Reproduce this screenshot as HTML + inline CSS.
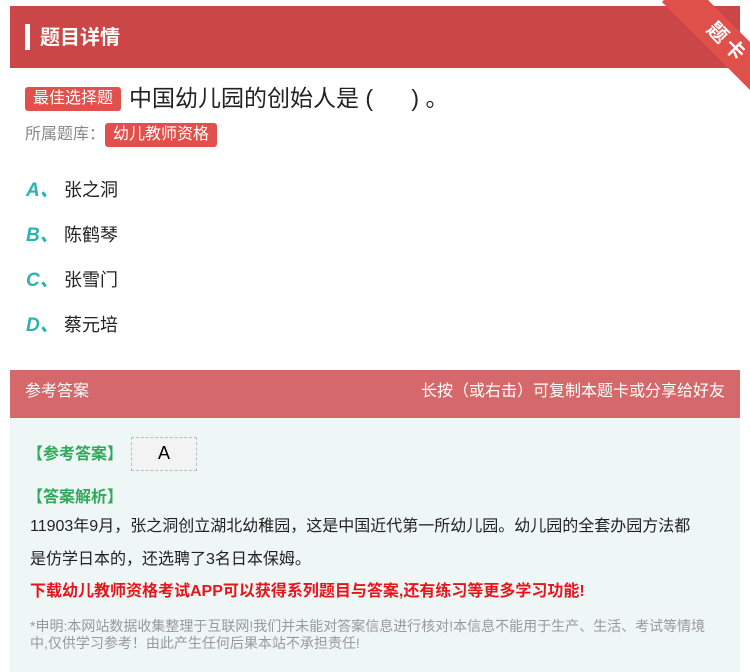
<!DOCTYPE html>
<html><head><meta charset="utf-8"><style>
body{margin:0;width:750px;height:672px;overflow:hidden;background:#fff;font-family:"Liberation Sans","Noto Sans CJK SC",sans-serif;position:relative}
.hd{position:absolute;left:10px;top:6px;width:730px;height:62px;background:#cb4647}
.hd .bar{position:absolute;left:15px;top:18px;width:5px;height:26px;background:#fff}
.hd .t{position:absolute;left:30px;top:15px;color:#fff;font-size:20px;font-weight:bold}
.tag{display:inline-block;background:#e2504b;color:#fff;border-radius:3px;font-size:16px;padding:0 8px;height:24px;line-height:24px}
.q{position:absolute;left:25px;top:79px;font-size:23px;color:#222}
.q .tag{vertical-align:3px;margin-right:8px}
.lib{position:absolute;left:25px;top:120px;font-size:16px;color:#888}
.opt{position:absolute;left:26px;font-size:18px;color:#222}
.opt b{color:#2bb3b0;font-style:italic;font-size:19px;display:inline-block;width:38px}
.ans{position:absolute;left:10px;top:370px;width:730px;height:302px;background:#eef7f5}
.ah{height:48px;background:#d4686a;color:#fff;font-size:16px;line-height:44px;padding:0 15px;display:flex;justify-content:space-between}
.g{color:#2fa85a;font-size:16px;font-weight:bold;position:absolute;left:17px}
.txt{position:absolute;left:20px;top:140px;width:675px;font-size:16px;line-height:33px;color:#222}
.red{position:absolute;left:20px;top:207px;color:#e8141b;font-size:16px;font-weight:bold}
.note{position:absolute;left:20px;top:248px;width:690px;color:#999;font-size:14px;line-height:17px}
</style></head><body>
<div class="hd"><div class="bar"></div><div class="t">题目详情</div></div>
<div style="position:absolute;right:0;top:0;width:100px;height:100px;overflow:hidden"><div style="position:absolute;left:2px;top:26px;width:150px;height:34px;background:#e0504a;transform:rotate(45deg);color:#fff;font-size:20px;text-align:center;line-height:34px;font-weight:bold;letter-spacing:4px">题卡</div></div>
<div class="q"><span class="tag">最佳选择题</span>中国幼儿园的创始人是 (&nbsp;&nbsp;&nbsp;&nbsp;&nbsp;&nbsp;) 。</div>
<div class="lib">所属题库：<span class="tag">幼儿教师资格</span></div>
<div class="opt" style="top:175px"><b>A、</b>张之洞</div>
<div class="opt" style="top:220px"><b>B、</b>陈鹤琴</div>
<div class="opt" style="top:265px"><b>C、</b>张雪门</div>
<div class="opt" style="top:310px"><b>D、</b>蔡元培</div>
<div class="ans">
<div class="ah"><span>参考答案</span><span>长按（或右击）可复制本题卡或分享给好友</span></div>
<div class="g" style="top:70px">【参考答案】</div>
<div style="position:absolute;left:121px;top:67px;width:64px;height:32px;background:#f3f3f3;border:1px dashed #bbb;font-size:18px;text-align:center;line-height:30px">A</div>
<div class="g" style="top:113px">【答案解析】</div>
<div class="txt">11903年9月，张之洞创立湖北幼稚园，这是中国近代第一所幼儿园。幼儿园的全套办园方法都是仿学日本的，还选聘了3名日本保姆。</div>
<div class="red">下载幼儿教师资格考试APP可以获得系列题目与答案,还有练习等更多学习功能!</div>
<div class="note">*申明:本网站数据收集整理于互联网!我们并未能对答案信息进行核对!本信息不能用于生产、生活、考试等情境中,仅供学习参考！由此产生任何后果本站不承担责任!</div>
</div>
</body></html>
